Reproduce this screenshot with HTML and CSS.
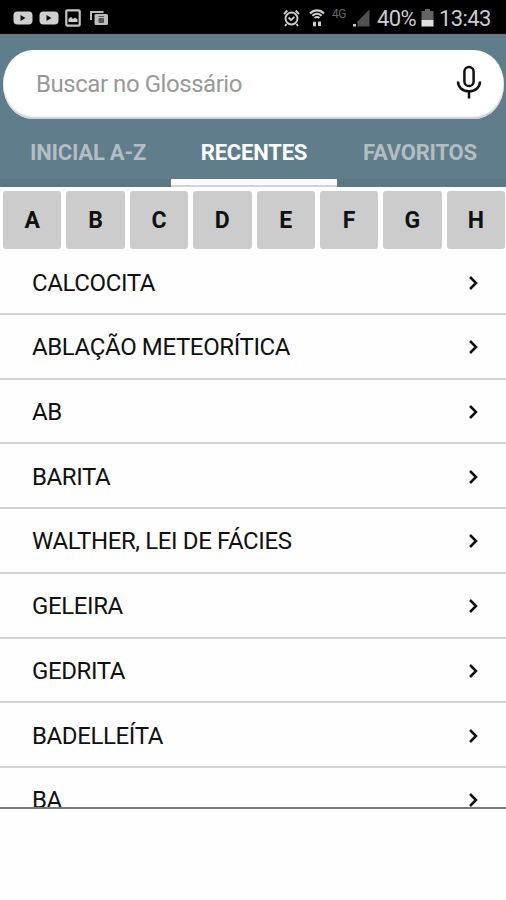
FILE: index.html
```html
<!DOCTYPE html>
<html lang="pt-BR">
<head>
    <meta charset="UTF-8">
    <meta name="viewport" content="width=device-width, initial-scale=1.0">
    <title>Glossário</title>
    <link rel="stylesheet" href="styles.css">
</head>
<body>
    <div class="status-bar">
        <div class="status-left">
            <svg class="video" width="20" height="14" viewBox="0 0 20 14"><rect x="0.5" y="0.5" width="19" height="13" rx="4" fill="#cfcfcf"/><path d="M7.500 4v6l5-3z" fill="#111"/></svg>
            <svg class="video" width="20" height="14" viewBox="0 0 20 14"><rect x="0.5" y="0.5" width="19" height="13" rx="4" fill="#cfcfcf"/><path d="M7.500 4v6l5-3z" fill="#111"/></svg>
            <svg class="photo" width="16" height="18" viewBox="0 0 16 18"><rect x="1.300" y="1.300" width="13.400" height="15.400" rx="1" fill="none" stroke="#c4c4c4" stroke-width="2.200"/><path d="M3.500 13V10l2.500-2 2 2 2-1.500 2.500 2V13z" fill="#d0d0d0"/></svg>
            <svg class="gallery" width="18" height="16" viewBox="0 0 18 16"><path d="M1 10V2h12.500" fill="none" stroke="#bbb" stroke-width="2"/><rect x="4.500" y="4" width="13.500" height="11" rx="1.500" fill="#bbb"/><path d="M8.500 6.500h5.500M9 8.500h4.500v4H9z" fill="#555" stroke="#555"/></svg>
        </div>
        <div class="status-right">
            <svg class="alarm" width="17" height="18" viewBox="0 0 17 18" fill="none" stroke="#ccc" stroke-width="1.900"><circle cx="8.500" cy="9.500" r="6"/><path d="M5.500 8.500l2.500 2.500L11.500 8M1 5l3.300-3.500M16 5l-3.300-3.500M3.500 15l-1.500 2M13.500 15l1.500 2"/></svg>
            <svg class="wifi" width="16" height="18" viewBox="0 0 16 18" fill="none" stroke="#ccc" stroke-width="2.100"><path d="M1 4.500C5 .3 11 .3 15 4.500M3.300 6.800c3-2.600 6.400-2.600 9.400 0M5.500 9c1.600-1.300 3.400-1.300 5 0"/><path d="M5.500 17.300v-4.500M10.500 12.500V17" stroke-width="3"/></svg>
            <span class="network">4G</span>
            <svg class="signal" width="18" height="18" viewBox="0 0 18 18"><path d="M17.500.5V17.500H5.500v-5z" fill="#505050"/><path d="M1 15h3v2.500H1z" fill="#ccc"/></svg>
            <span class="percent">40%</span>
            <svg class="battery" width="13" height="18" viewBox="0 0 13 18"><path d="M4 0h5v2h3.500v9H.5V2H4z" fill="#656565"/><path d="M.5 11h12v6.500H.5z" fill="#e0e0e0"/></svg>
            <span class="clock">13:43</span>
        </div>
    </div>

    <header class="header">
        <div class="search">
            <span class="placeholder">Buscar no Glossário</span>
            <svg class="mic" width="26" height="36" viewBox="0 0 26 36" fill="none" stroke="#111" stroke-width="2.500"><rect x="8.400" y="2" width="9.200" height="19" rx="4.600"/><path d="M2 16.500c0 5.500 4.500 9.800 11 9.800s11-4.300 11-9.800M13 26.300v7.200"/></svg>
        </div>
        <nav class="tabs">
            <div class="tab">INICIAL A-Z</div>
            <div class="tab active">RECENTES</div>
            <div class="tab">FAVORITOS</div>
        </nav>
    </header>

    <div class="letters">
        <div class="letter">A</div>
        <div class="letter">B</div>
        <div class="letter">C</div>
        <div class="letter">D</div>
        <div class="letter">E</div>
        <div class="letter">F</div>
        <div class="letter">G</div>
        <div class="letter">H</div>
    </div>

    <main class="list" id="list"></main>

    <script>
        const terms = [
            'CALCOCITA',
            'ABLAÇÃO METEORÍTICA',
            'AB',
            'BARITA',
            'WALTHER, LEI DE FÁCIES',
            'GELEIRA',
            'GEDRITA',
            'BADELLEÍTA',
            'BA'
        ];

        const list = document.getElementById('list');
        terms.forEach(term => {
            const item = document.createElement('div');
            item.className = 'item';
            item.innerHTML = `<span>${term}</span>
                <svg class="chevron" width="10" height="16" viewBox="0 0 10 16"><path d="M2 2l6 6-6 6" fill="none" stroke="#111" stroke-width="2.500"/></svg>`;
            list.appendChild(item);
        });
    </script>
</body>
</html>
```
FILE: styles.css
```css
* {
    box-sizing: border-box;
}
body {
    margin: 0;
    background-color: #fefefe;
    font-family: Roboto, "Liberation Sans", sans-serif;
    color: #111;
}
svg {
    display: block;
    flex: none;
}
.status-bar {
    display: flex;
    justify-content: space-between;
    height: 34px;
    padding: 2px 15px 0 13px;
    background-color: #000;
    color: #ccc;
}
.status-left, .status-right {
    display: flex;
    align-items: center;
}
.status-left {
    gap: 6px;
}
.gallery {
    margin-left: 3px;
}
.alarm {
    margin-right: 1px;
}
.wifi {
    margin-left: 8px;
}
.network {
    width: 15px;
    margin: -8px 5px 0 7px;
    font-size: 12px;
    line-height: 12px;
    letter-spacing: -0.5px;
    color: #666;
}
.percent {
    width: 40px;
    margin-left: 7px;
    font-size: 22px;
    letter-spacing: -0.6px;
}
.battery {
    margin-left: 4px;
}
.clock {
    width: 52px;
    margin-left: 5px;
    font-size: 22px;
    letter-spacing: -0.6px;
}
.header {
    height: 153px;
    padding: 16px 2px 0 3px;
    background-color: #607d8b;
}
.search {
    display: flex;
    align-items: center;
    justify-content: space-between;
    height: 69px;
    padding: 0 22px 0 33px;
    border-radius: 30px / 35px;
    background-color: #fff;
    box-shadow: inset 0 -2px 2px #c5ced2;
}
.placeholder {
    margin-top: -1px;
    font-size: 24px;
    letter-spacing: -0.45px;
    color: #999;
}
.mic {
    margin-top: -3px;
}
.tabs {
    display: flex;
    height: 68px;
    margin: 0 -2px 0 -3px;
}
.tab {
    flex: 1;
    padding-top: 20px;
    font-size: 22px;
    font-weight: bold;
    line-height: 28px;
    letter-spacing: -0.2px;
    text-align: center;
    color: #b4bdc2;
    white-space: nowrap;
    box-shadow: inset 0 -8px 0 #5a7785;
}
.tab:first-child {
    flex: 0 0 171px;
    padding-left: 5px;
}
.tab:last-child {
    padding-right: 3px;
}
.tab.active {
    flex: 0 0 166px;
    color: #fff;
    border-bottom: 2px solid #cfd4d6;
    box-shadow: inset 0 -6px 0 #fff;
}
.letters {
    display: flex;
    gap: 5px;
    height: 63.4px;
    padding: 4px 1px 1px 3px;
}
.letter {
    flex: 1;
    height: 58px;
    border-radius: 3px;
    background-color: #ccc;
    font-size: 23px;
    font-weight: bold;
    line-height: 60px;
    text-align: center;
}
.list {
    height: 558.6px;
    overflow: hidden;
    border-bottom: 2px solid #777;
}
.item {
    display: flex;
    align-items: center;
    justify-content: space-between;
    height: 64.7px;
    padding: 2px 28px 0 32px;
    border-bottom: 2px solid #d4d4d4;
    font-size: 24px;
    letter-spacing: -0.38px;
}
```
